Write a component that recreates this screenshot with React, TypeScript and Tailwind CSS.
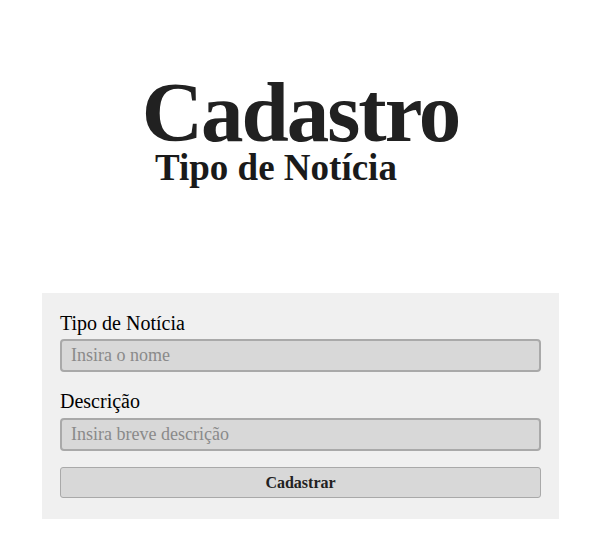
import React from "react";

export default function App() {
  const serif = { fontFamily: '"Liberation Serif", "DejaVu Serif", serif' };
  return (
    <div className="w-[616px] h-[548px] bg-white" style={serif}>
      <div className="w-[517px] ml-[42px] pt-[75px]">
        <h1 className="text-center text-[85px] leading-[74px] font-bold tracking-[-2px] text-[#212121]">
          Cadastro
        </h1>
        <h2 className="pl-[113px] text-[37px] leading-[37px] font-bold text-[#1a1a1a]">
          Tipo de Notícia
        </h2>
        <form className="mt-[107px] bg-[#f0f0f0] px-[18px] pt-[18px] pb-[21px] flex flex-col">
          <label className="text-[20px] leading-[24px] text-black">Tipo de Notícia</label>
          <input
            className="mt-[4px] h-[33px] rounded-[4px] border-2 border-[#a9a9a9] bg-[#d8d8d8] px-[9px] text-[18px] placeholder:text-[#8a8a8a] outline-none"
            placeholder="Insira o nome"
            style={serif}
          />
          <label className="mt-[17px] text-[20px] leading-[24px] text-black">Descrição</label>
          <input
            className="mt-[5px] h-[33px] rounded-[4px] border-2 border-[#a9a9a9] bg-[#d8d8d8] px-[9px] text-[18px] placeholder:text-[#8a8a8a] outline-none"
            placeholder="Insira breve descrição"
            style={serif}
          />
          <button
            type="button"
            className="mt-[16px] h-[31px] rounded-[3px] border border-[#a9a9a9] bg-[#d8d8d8] text-[16px] font-bold text-[#222]"
            style={serif}
          >
            Cadastrar
          </button>
        </form>
      </div>
    </div>
  );
}
